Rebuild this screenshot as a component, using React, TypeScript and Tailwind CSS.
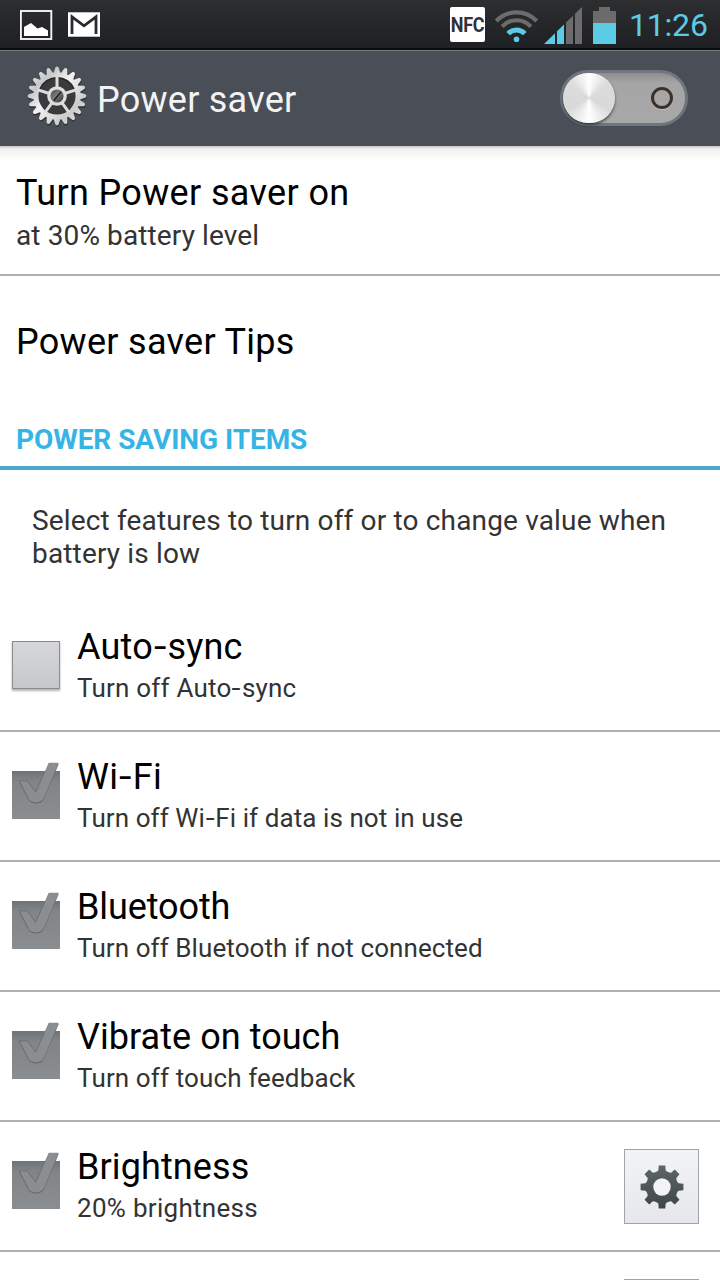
import { Fragment } from "react";
import clsx from "clsx";

const TEETH = 20;

// outline of the round header gear, centred on 0,0
function gearPath() {
  const points: string[] = [];
  for (let i = 0; i < TEETH; i++) {
    const a = (i / TEETH) * Math.PI * 2 - Math.PI / 2;
    const steps = [
      [-0.135, 23.6],
      [-0.06, 28.2],
      [-0.035, 29.2],
      [0.035, 29.2],
      [0.06, 28.2],
      [0.135, 23.6],
    ];
    for (const [da, r] of steps) {
      points.push(`${(Math.cos(a + da) * r).toFixed(2)} ${(Math.sin(a + da) * r).toFixed(2)}`);
    }
  }
  return `M${points.join("L")}Z`;
}

function GearLogo() {
  return (
    <svg className="block -mt-[5px] w-[64px] h-[64px] shrink-0" viewBox="-32 -32 64 64">
      <defs>
        <linearGradient id="metal" x1="0" y1="0" x2="1" y2="1">
          <stop offset="0" stopColor="#f4f4f4" />
          <stop offset="0.25" stopColor="#c8c8c8" />
          <stop offset="0.45" stopColor="#f2f2f2" />
          <stop offset="0.75" stopColor="#cccccc" />
          <stop offset="1" stopColor="#eeeeee" />
        </linearGradient>
        <linearGradient id="hub" x1="0" y1="0" x2="1" y2="1">
          <stop offset="0" stopColor="#4a4a4a" />
          <stop offset="0.45" stopColor="#7a7a7a" />
          <stop offset="1" stopColor="#303030" />
        </linearGradient>
      </defs>
      <path d={gearPath()} fill="#22252a" opacity="0.65" transform="translate(0.4 1.6)" />
      <path d={gearPath()} fill="url(#metal)" />
      <circle r="18.6" fill="#3a3a3c" />
      <path d="M-17 -7A18.4 18.4 0 0 1 17 -7" fill="none" stroke="#26282b" strokeWidth="1.5" />
      {[0, 72, 144, 216, 288].map((angle) => (
        <path key={angle} d="M0 -8V-20" stroke="#dddddd" strokeWidth="3" transform={`rotate(${angle})`} />
      ))}
      <circle r="9.8" fill="#dedede" />
      <circle r="6.6" fill="url(#hub)" />
      <path d="M-3.2 4.6L4 -4.2" stroke="#202020" strokeWidth="1.5" />
    </svg>
  );
}

function StatusBar() {
  return (
    <div className="h-[50px] shrink-0 flex items-start bg-linear-to-b from-[#2d2e30] to-[#1e2023] border-b-2 border-[#0b0c0d]">
      <svg className="block w-[84px] h-[34px] ml-5 mt-2" viewBox="20 8 84 34">
        <rect x="20.9" y="11" width="30.4" height="28" fill="none" stroke="#f4f4f4" strokeWidth="1.9" />
        <path d="M24 36V27L31 23L37.5 28.5L42 27L48 30.5V36Z" fill="#fff" />
        <rect x="68" y="12.3" width="32" height="24.4" fill="#fff" />
        <path d="M72 34V16.8L84 25.8L96 16.8V34" fill="none" stroke="#2a2b2e" strokeWidth="2.8" />
      </svg>
      <div className="ml-[346px] mt-[7px] w-[35px] h-[35px] rounded-[2px] bg-white flex items-center justify-center text-[#303235]">
        <span className="scale-x-90 text-[20px] font-bold tracking-[-0.4px] leading-none">NFC</span>
      </div>
      <svg className="block w-[132px] h-[38px] ml-[9px] mt-[7px] shrink-0" viewBox="494 7 132 38">
        <g fill="none">
          <path d="M496.3 21A28 28 0 0 1 536.7 21" stroke="#6c6c6c" strokeWidth="4.2" />
          <path d="M502.1 26.6A19.5 19.5 0 0 1 530.9 26.6" stroke="#6c6c6c" strokeWidth="4.2" />
          <path d="M508.2 33.6A11.2 11.2 0 0 1 524.8 33.6" stroke="#5bcbe6" strokeWidth="5" />
        </g>
        <circle cx="516.5" cy="39.3" r="2.8" fill="#5bcbe6" />
        <path d="M544 44L555 33.3V44ZM557 31.3L564 24.5V44H557Z" fill="#5bcbe6" />
        <path d="M566 22.6L573 15.8V44H566ZM575 13.8L582 7V44H575Z" fill="#6c6c6c" />
        <path d="M593 23V11H599V7H610V11H616V23Z" fill="#6c6c6c" />
        <path d="M593 23H616V44H593Z" fill="#5bcbe6" />
      </svg>
      <span className="mt-[7px] ml-[3px] text-[32px] leading-[37px] tracking-[-0.2px] text-[#5bcbe6]">11:26</span>
    </div>
  );
}

function Toggle() {
  return (
    <div className="-mt-[2px] w-[128px] h-[56px] rounded-full border-[3px] border-[#707680] bg-linear-to-b from-[#8e8e8e] via-[#a5a5a5] via-20% to-[#a8a8a8] flex items-center justify-between pr-[12px]">
      <div className="w-[52px] h-[50px] rounded-full shadow-[0_2px_3px_rgba(0,0,0,0.55)] bg-[conic-gradient(#fff,#dcdcdc_50deg,#d9d9d9_120deg,#fff_180deg,#d9d9d9_240deg,#dcdcdc_310deg,#fff)]" />
      <div className="w-[22px] h-[22px] rounded-full border-3 border-[#3d3029] shadow-[0_1px_0_#c0c0c0]" />
    </div>
  );
}

const TICK = "M7.2 18.8H15.2L23.7 30.2L36.7 0.7H46.7L31.8 36Q29.5 40.4 24 40.4Q18.6 40.4 16.2 36.4Z";

function Checkbox({ checked }: { checked: boolean }) {
  if (!checked) {
    return (
      <div className="mt-[39px] mr-px w-[48px] h-[48px] shrink-0 border border-[#8b8b8d] bg-linear-to-b from-[#d6d7d9] to-[#c6c7ca] shadow-[0_2px_2px_rgba(0,0,0,0.3)]" />
    );
  }
  return (
    <svg className="block mt-[30px] w-[49px] h-[57px] shrink-0" viewBox="0 0 49 57">
      <defs>
        <linearGradient id="box" x1="0" y1="0" x2="0" y2="1">
          <stop offset="0" stopColor="#6f7375" />
          <stop offset="0.2" stopColor="#808486" />
          <stop offset="1" stopColor="#8a8e90" />
        </linearGradient>
      </defs>
      <path d="M0 9H48V57H0Z" fill="url(#box)" />
      <path d={TICK} fill="#64686a" transform="translate(0 1.2)" />
      <path d={TICK} fill="#8a8e90" />
      <path d="M16.2 36.4L7.2 18.8H15.2L23.7 30.2L33 9" fill="none" stroke="#6c7072" strokeWidth="1" />
    </svg>
  );
}

function SettingsButton() {
  return (
    <button className="mt-[27px] w-[75px] h-[75px] shrink-0 border border-[#a0a4ab] bg-linear-to-b from-[#f3f4f6] to-[#e6e7eb] flex items-center justify-center">
      <svg className="block w-[44px] h-[44px]" viewBox="-22 -22 44 44">
        <defs>
          <linearGradient id="cog" x1="0" y1="-22" x2="0" y2="22" gradientUnits="userSpaceOnUse">
            <stop offset="0" stopColor="#5f6667" />
            <stop offset="1" stopColor="#3f4647" />
          </linearGradient>
        </defs>
        <path
          fill="url(#cog)"
          d={[0, 45, 90, 135, 180, 225, 270, 315]
            .map((deg, i) => {
              const a = (deg * Math.PI) / 180;
              const at = (x: number, y: number) =>
                `${(x * Math.cos(a) - y * Math.sin(a)).toFixed(2)} ${(x * Math.sin(a) + y * Math.cos(a)).toFixed(2)}`;
              return `${i ? "L" : "M"}${at(-5, -15.4)}L${at(-3.7, -16.6)}L${at(-3.3, -21.4)}L${at(3.3, -21.4)}L${at(3.7, -16.6)}L${at(5, -15.4)}`;
            })
            .join("") + "Z"}
        />
        <circle r="8.7" fill="#f2f3f5" />
      </svg>
    </button>
  );
}

// draws hyphens wider than the font does
function Label({ text }: { text: string }) {
  return text.split("-").map((part, i) => (
    <Fragment key={i}>
      {i > 0 && <span className="inline-block px-[0.06em] scale-x-125">-</span>}
      {part}
    </Fragment>
  ));
}

const items = [
  { title: "Auto-sync", text: "Turn off Auto-sync", checked: false, spacing: "tracking-[0.2px]", textSpacing: "tracking-[0.2px]" },
  { title: "Wi-Fi", text: "Turn off Wi-Fi if data is not in use", checked: true, spacing: "tracking-[0.3px]", textSpacing: "tracking-[0.08px]" },
  { title: "Bluetooth", text: "Turn off Bluetooth if not connected", checked: true, spacing: "tracking-[-0.1px]", textSpacing: "tracking-[0.08px]" },
  { title: "Vibrate on touch", text: "Turn off touch feedback", checked: true, spacing: "tracking-[0.05px]", textSpacing: "tracking-[0.12px]" },
  { title: "Brightness", text: "20% brightness", checked: true, settings: true, spacing: "tracking-[0.1px]", textSpacing: "tracking-[0.3px]" },
];

export default function App() {
  return (
    <div className="w-[720px] h-[1280px] overflow-hidden flex flex-col bg-white text-black font-['Roboto',sans-serif] whitespace-nowrap">
      <StatusBar />

      {/* Title bar */}
      <header className="h-[96px] shrink-0 border-t border-[#777c82] bg-[#4a4e56] flex items-center pl-[25px] pr-8">
        <GearLogo />
        <h1 className="flex-1 ml-[8px] mt-[2px] text-[36px] leading-[42px] tracking-[0.25px] text-[#f3f3f3]">Power saver</h1>
        <Toggle />
      </header>
      <div className="h-[14px] shrink-0 bg-linear-to-b from-[#c6c6c6] via-[#f0f0f0] via-20% to-white" />

      <section className="h-[116px] shrink-0 pt-[12px] pl-4 border-b-2 border-[#adb0b5]">
        <h2 className="text-[36px] leading-[42px] tracking-[0.36px]">Turn Power saver on</h2>
        <p className="mt-[5px] text-[28px] leading-[33px] tracking-[0.12px] text-[#333]">at 30% battery level</p>
      </section>
      <section className="h-[132px] shrink-0 pt-[45px] pl-4">
        <h2 className="text-[36px] leading-[42px] tracking-[0.3px]">Power saver Tips</h2>
      </section>

      <h3 className="h-[62px] shrink-0 pt-[15px] pl-4 border-b-4 border-[#4ba9c8] text-[28px] leading-[33px] font-bold tracking-[-0.06px] text-[#35b5e5]">
        POWER SAVING ITEMS
      </h3>
      <p className="h-[132px] shrink-0 pt-[34px] pl-8 text-[28px] leading-[33px] tracking-[0.16px] text-[#333]">
        Select features to turn off or to change value when
        <br />
        battery is low
      </p>

      {items.map((item) => (
        <div key={item.title} className="h-[130px] shrink-0 flex items-start pl-3 pr-[21px] border-b-2 border-[#adb0b5]">
          <Checkbox checked={item.checked} />
          <div className="flex-1 pt-[24px] ml-[16px]">
            <div className={clsx("text-[36px] leading-[42px]", item.spacing)}>
              <Label text={item.title} />
            </div>
            <div className={clsx("mt-[5px] text-[26px] leading-[30px] text-[#333]", item.textSpacing)}>
              <Label text={item.text} />
            </div>
          </div>
          {item.settings && <SettingsButton />}
        </div>
      ))}
      <div className="flex justify-end pr-[21px]">
        <SettingsButton />
      </div>
    </div>
  );
}
